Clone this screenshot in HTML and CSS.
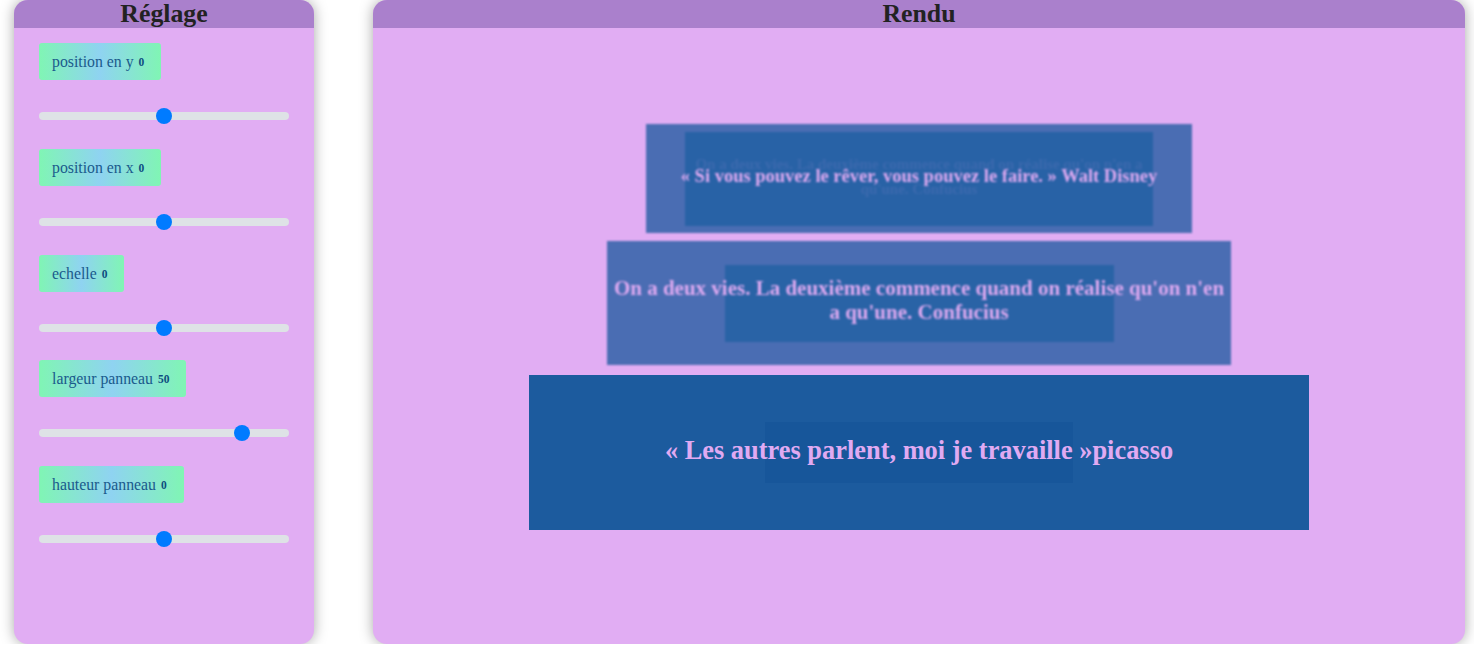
FILE: index.html
```html
<!DOCTYPE html>
<html lang="fr">
<head>
<meta charset="utf-8">
<title>Réglage / Rendu</title>
<link rel="stylesheet" href="styles.css">
</head>
<body>
<div class="layout">
  <section class="panel panel-settings">
    <h2 class="panel-title">Réglage</h2>
    <div class="panel-body settings-body">
      <div class="control">
        <div class="badge">position en y <b class="val">0</b></div>
        <input class="range" type="range" min="-100" max="100" value="0">
      </div>
      <div class="control">
        <div class="badge">position en x <b class="val">0</b></div>
        <input class="range" type="range" min="-100" max="100" value="0">
      </div>
      <div class="control">
        <div class="badge">echelle <b class="val">0</b></div>
        <input class="range" type="range" min="-100" max="100" value="0">
      </div>
      <div class="control">
        <div class="badge">largeur panneau <b class="val">50</b></div>
        <input class="range" type="range" min="0" max="60" value="50">
      </div>
      <div class="control">
        <div class="badge">hauteur panneau <b class="val">0</b></div>
        <input class="range" type="range" min="-100" max="100" value="0">
      </div>
    </div>
  </section>

  <section class="panel panel-render">
    <h2 class="panel-title">Rendu</h2>
    <div class="panel-body render-body">
      <div class="quote quote-1">
        <div class="quote-inner"></div>
        <p class="quote-ghost">On a deux vies. La deuxième commence quand on réalise qu'on n'en a qu'une. Confucius</p>
        <p class="quote-text">« Si vous pouvez le rêver, vous pouvez le faire. » Walt Disney</p>
      </div>
      <div class="quote quote-2">
        <div class="quote-inner"></div>
        <p class="quote-text">On a deux vies. La deuxième commence quand on réalise qu'on n'en a qu'une. Confucius</p>
      </div>
      <div class="quote quote-3">
        <div class="quote-inner"></div>
        <p class="quote-text">« Les autres parlent, moi je travaille »picasso</p>
      </div>
    </div>
  </section>
</div>
</body>
</html>
```
FILE: styles.css
```css
html, body {
  margin: 0;
  padding: 0;
  background: #ffffff;
  font-family: "Liberation Serif", "Times New Roman", serif;
}

.layout {
  display: flex;
  gap: 59px;
  padding-left: 14px;
  height: 644px;
}

.panel {
  display: flex;
  flex-direction: column;
  background: #e1adf3;
  border-radius: 14px;
  overflow: hidden;
  box-shadow: 0 0 14px rgba(0, 0, 0, 0.35);
  height: 644px;
}

.panel-settings { width: 300px; }
.panel-render { width: 1092px; }

.panel-title {
  margin: 0;
  height: 28px;
  line-height: 27px;
  font-size: 25.8px;
  font-weight: bold;
  text-align: center;
  color: #222222;
  background: #aa80cc;
}

.panel-body { flex: 1; }

.settings-body {
  padding: 15px 25px 0 25px;
}

.control {
  display: flex;
  flex-direction: column;
  align-items: flex-start;
  margin-bottom: 24.75px;
}

.badge {
  height: 37px;
  box-sizing: border-box;
  padding: 9px 17px 0 13px;
  font-size: 15.8px;
  line-height: 20px;
  color: #1a5a8c;
  border-radius: 3px;
  background: linear-gradient(to right, #80f5b4 0%, #8fd3f1 50%, #80f5b4 100%);
}

.val {
  font-size: 11.5px;
  color: #0d4d80;
  margin-left: 1px;
  vertical-align: 1px;
}

.range {
  -webkit-appearance: none;
  appearance: none;
  width: 250px;
  height: 16px;
  margin: 28px 0 0 0;
  padding: 0;
  background: transparent;
}

.range::-webkit-slider-runnable-track {
  height: 8px;
  background: #dee2e6;
  border-radius: 4px;
}

.range::-webkit-slider-thumb {
  -webkit-appearance: none;
  appearance: none;
  width: 16px;
  height: 16px;
  margin-top: -4px;
  border-radius: 50%;
  background: #007bff;
  border: 0;
}

.render-body {
  display: flex;
  flex-direction: column;
  align-items: center;
  padding-top: 96px;
}

.quote {
  display: grid;
  place-items: center;
  box-sizing: border-box;
  padding: 0 4px;
}

.quote > * { grid-area: 1 / 1; }

.quote-text {
  margin: 0;
  font-weight: bold;
  text-align: center;
  color: #e0aaf2;
  position: relative;
}

.quote-ghost {
  margin: 0;
  font-size: 15px;
  line-height: 25px;
  font-weight: bold;
  text-align: center;
  color: #e0aaf2;
  opacity: 0.1;
  padding: 0 30px;
  transform: translateY(-2px);
}

.quote-1 {
  width: 546px;
  height: 109px;
  background: #4a6db3;
  filter: blur(1.3px);
}
.quote-1 .quote-inner {
  width: 468px;
  height: 94px;
  background: #2862a6;
}
.quote-1 .quote-text {
  font-size: 18.5px;
  line-height: 22px;
  margin-top: -5px;
  white-space: nowrap;
}

.quote-2 {
  width: 624px;
  height: 124px;
  margin-top: 8px;
  background: #4a6db3;
  filter: blur(1.1px);
}
.quote-2 .quote-inner {
  width: 389px;
  height: 77px;
  background: #2963a6;
}
.quote-2 .quote-text {
  font-size: 21px;
  line-height: 24px;
  margin-top: -6px;
}

.quote-3 {
  width: 780px;
  height: 155px;
  margin-top: 10px;
  background: #1c5b9e;
}
.quote-3 .quote-inner {
  width: 308px;
  height: 61px;
  background: #17569a;
}
.quote-3 .quote-text {
  font-size: 26.4px;
  line-height: 30px;
  margin-top: -6px;
}
```
